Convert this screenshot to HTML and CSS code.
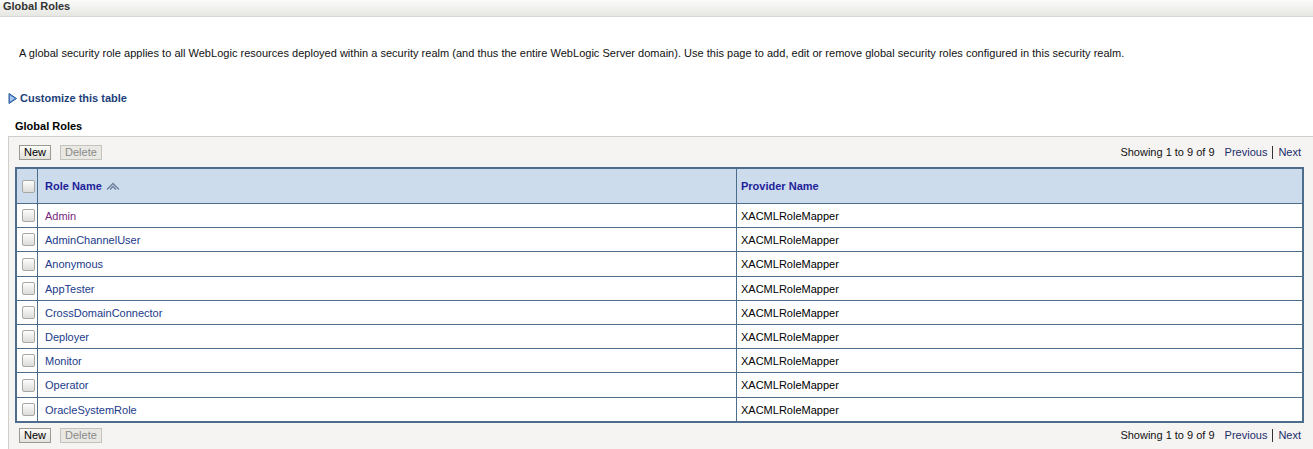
FILE: index.html
```html
<!DOCTYPE html>
<html>
<head>
<meta charset="utf-8">
<link rel="stylesheet" href="styles.css">
</head>
<body>
<div class="titlebar">Global Roles</div>
<p class="intro">A global security role applies to all WebLogic resources deployed within a security realm (and thus the entire WebLogic Server domain). Use this page to add, edit or remove global security roles configured in this security realm.</p>
<div class="customize">
  <svg class="tri" width="9" height="11" viewBox="0 0 9 11"><path d="M1 0.5 L8.5 5.5 L1 10.5 Z" fill="#5b8fd0" stroke="#2a5a9a" stroke-width="1"/><path d="M2 2.5 L6.5 5.5 L2 8.5 Z" fill="#a9c8ef"/></svg>
  <a href="#" class="cust-link">Customize this table</a>
</div>
<div class="section-title">Global Roles</div>
<div class="panel">
  <div class="toolbar">
    <div class="btns"><span class="btn">New</span><span class="btn disabled">Delete</span></div>
    <div class="pager">Showing 1 to 9 of 9 <span class="pl">Previous</span><span class="sep"></span><span class="pl">Next</span></div>
  </div>
  <table class="grid">
    <thead>
      <tr><th class="cb"><span class="chk"></span></th><th class="c1">Role Name <svg class="sort" width="14" height="9" viewBox="0 0 14 9"><path d="M1 7.5 L7 1.5 L13 7.5" fill="none" stroke="#6a7f99" stroke-width="1.3"/><path d="M4 7.5 L7 4.5 L10 7.5" fill="none" stroke="#6a7f99" stroke-width="1.3"/></svg></th><th class="c2">Provider Name</th></tr>
    </thead>
    <tbody>
      <tr><td class="cb"><span class="chk"></span></td><td class="c1"><a href="#" class="visited">Admin</a></td><td class="c2">XACMLRoleMapper</td></tr>
      <tr><td class="cb"><span class="chk"></span></td><td class="c1"><a href="#">AdminChannelUser</a></td><td class="c2">XACMLRoleMapper</td></tr>
      <tr class="tall"><td class="cb"><span class="chk"></span></td><td class="c1"><a href="#">Anonymous</a></td><td class="c2">XACMLRoleMapper</td></tr>
      <tr><td class="cb"><span class="chk"></span></td><td class="c1"><a href="#">AppTester</a></td><td class="c2">XACMLRoleMapper</td></tr>
      <tr><td class="cb"><span class="chk"></span></td><td class="c1"><a href="#">CrossDomainConnector</a></td><td class="c2">XACMLRoleMapper</td></tr>
      <tr><td class="cb"><span class="chk"></span></td><td class="c1"><a href="#">Deployer</a></td><td class="c2">XACMLRoleMapper</td></tr>
      <tr><td class="cb"><span class="chk"></span></td><td class="c1"><a href="#">Monitor</a></td><td class="c2">XACMLRoleMapper</td></tr>
      <tr class="tall"><td class="cb"><span class="chk"></span></td><td class="c1"><a href="#">Operator</a></td><td class="c2">XACMLRoleMapper</td></tr>
      <tr><td class="cb"><span class="chk"></span></td><td class="c1"><a href="#">OracleSystemRole</a></td><td class="c2">XACMLRoleMapper</td></tr>
    </tbody>
  </table>
  <div class="toolbar bottom">
    <div class="btns"><span class="btn">New</span><span class="btn disabled">Delete</span></div>
    <div class="pager">Showing 1 to 9 of 9 <span class="pl">Previous</span><span class="sep"></span><span class="pl">Next</span></div>
  </div>
</div>
</body>
</html>
```
FILE: styles.css
```css
html, body {
  margin: 0;
  padding: 0;
  background: #ffffff;
}
body {
  font-family: "Liberation Sans", Arial, sans-serif;
  font-size: 11px;
  color: #000;
  width: 1313px;
  overflow: hidden;
}
.titlebar {
  height: 16px;
  line-height: 12px;
  padding-left: 3px;
  font-weight: bold;
  font-size: 11px;
  color: #333;
  background: linear-gradient(#fbfbfa, #e6e6e2);
  border-bottom: 1px solid #d6d6d2;
}
.intro {
  margin: 29px 0 0 19px;
  line-height: 14px;
  color: #111;
  letter-spacing: 0.02px;
}
.customize {
  display: flex;
  align-items: center;
  gap: 3px;
  margin: 31px 0 0 8px;
  height: 14px;
}
.tri { display: block; }
.cust-link {
  color: #1d3f7a;
  font-weight: bold;
  text-decoration: none;
}
.section-title {
  margin: 14px 0 0 15px;
  font-weight: bold;
  color: #000;
  height: 14px;
  line-height: 14px;
}
.panel {
  margin: 3px 0 0 8px;
  background: #f5f4f2;
  border: 1px solid #cfcecb;
  border-right: none;
  padding: 0 8px 0 6px;
  height: 320px;
  box-sizing: border-box;
}
.toolbar {
  display: flex;
  justify-content: space-between;
  align-items: center;
  height: 30px;
  padding: 0 4px 0 4px;
}
.toolbar.bottom {
  height: 24px;
}
.btns { display: flex; gap: 9px; }
.btn {
  display: inline-block;
  height: 13px;
  line-height: 13px;
  padding: 0 4px;
  border: 1px solid #9a9a94;
  background: linear-gradient(#fbfbf8, #e2e1da);
  color: #000;
  font-size: 11px;
}
.btn.disabled {
  color: #8a8a8a;
  border-color: #c4c4bf;
  background: #e9e8e3;
}
.pager {
  display: flex;
  align-items: center;
  color: #111;
}
.pl { color: #1a2d6b; }
.pager .pl:first-of-type { margin-left: 10px; }
.sep {
  display: inline-block;
  width: 1px;
  height: 13px;
  background: #333;
  margin: 0 5px;
}
.grid {
  width: 1289px;
  border-collapse: collapse;
  background: #fff;
  border: 2px solid #4d6d8c;
}
.grid th, .grid td {
  border: 1px solid #4d6d8c;
  padding: 0;
  text-align: left;
  vertical-align: middle;
}
.grid .c1 { padding-left: 7px; }
.grid .c2 { padding-left: 4px; }
.grid th {
  height: 34px;
  background: #cddced;
  color: #1e1e98;
  font-weight: bold;
}
.grid td {
  height: 23px;
}
.grid tr.tall td { height: 24px; }
.grid .cb {
  width: 15px;
  padding: 0 0 0 5px;
}
.grid th.c1 { width: 691px; }
.chk {
  display: block;
  width: 11px;
  height: 11px;
  border: 1px solid #a7a7a4;
  border-radius: 2px;
  background: linear-gradient(#fdfdfd, #dcdcda);
}
.sort { vertical-align: -1px; margin-left: 1px; }
.grid a {
  color: #213a8a;
  text-decoration: none;
}
.grid a.visited { color: #7b1f80; }
```
